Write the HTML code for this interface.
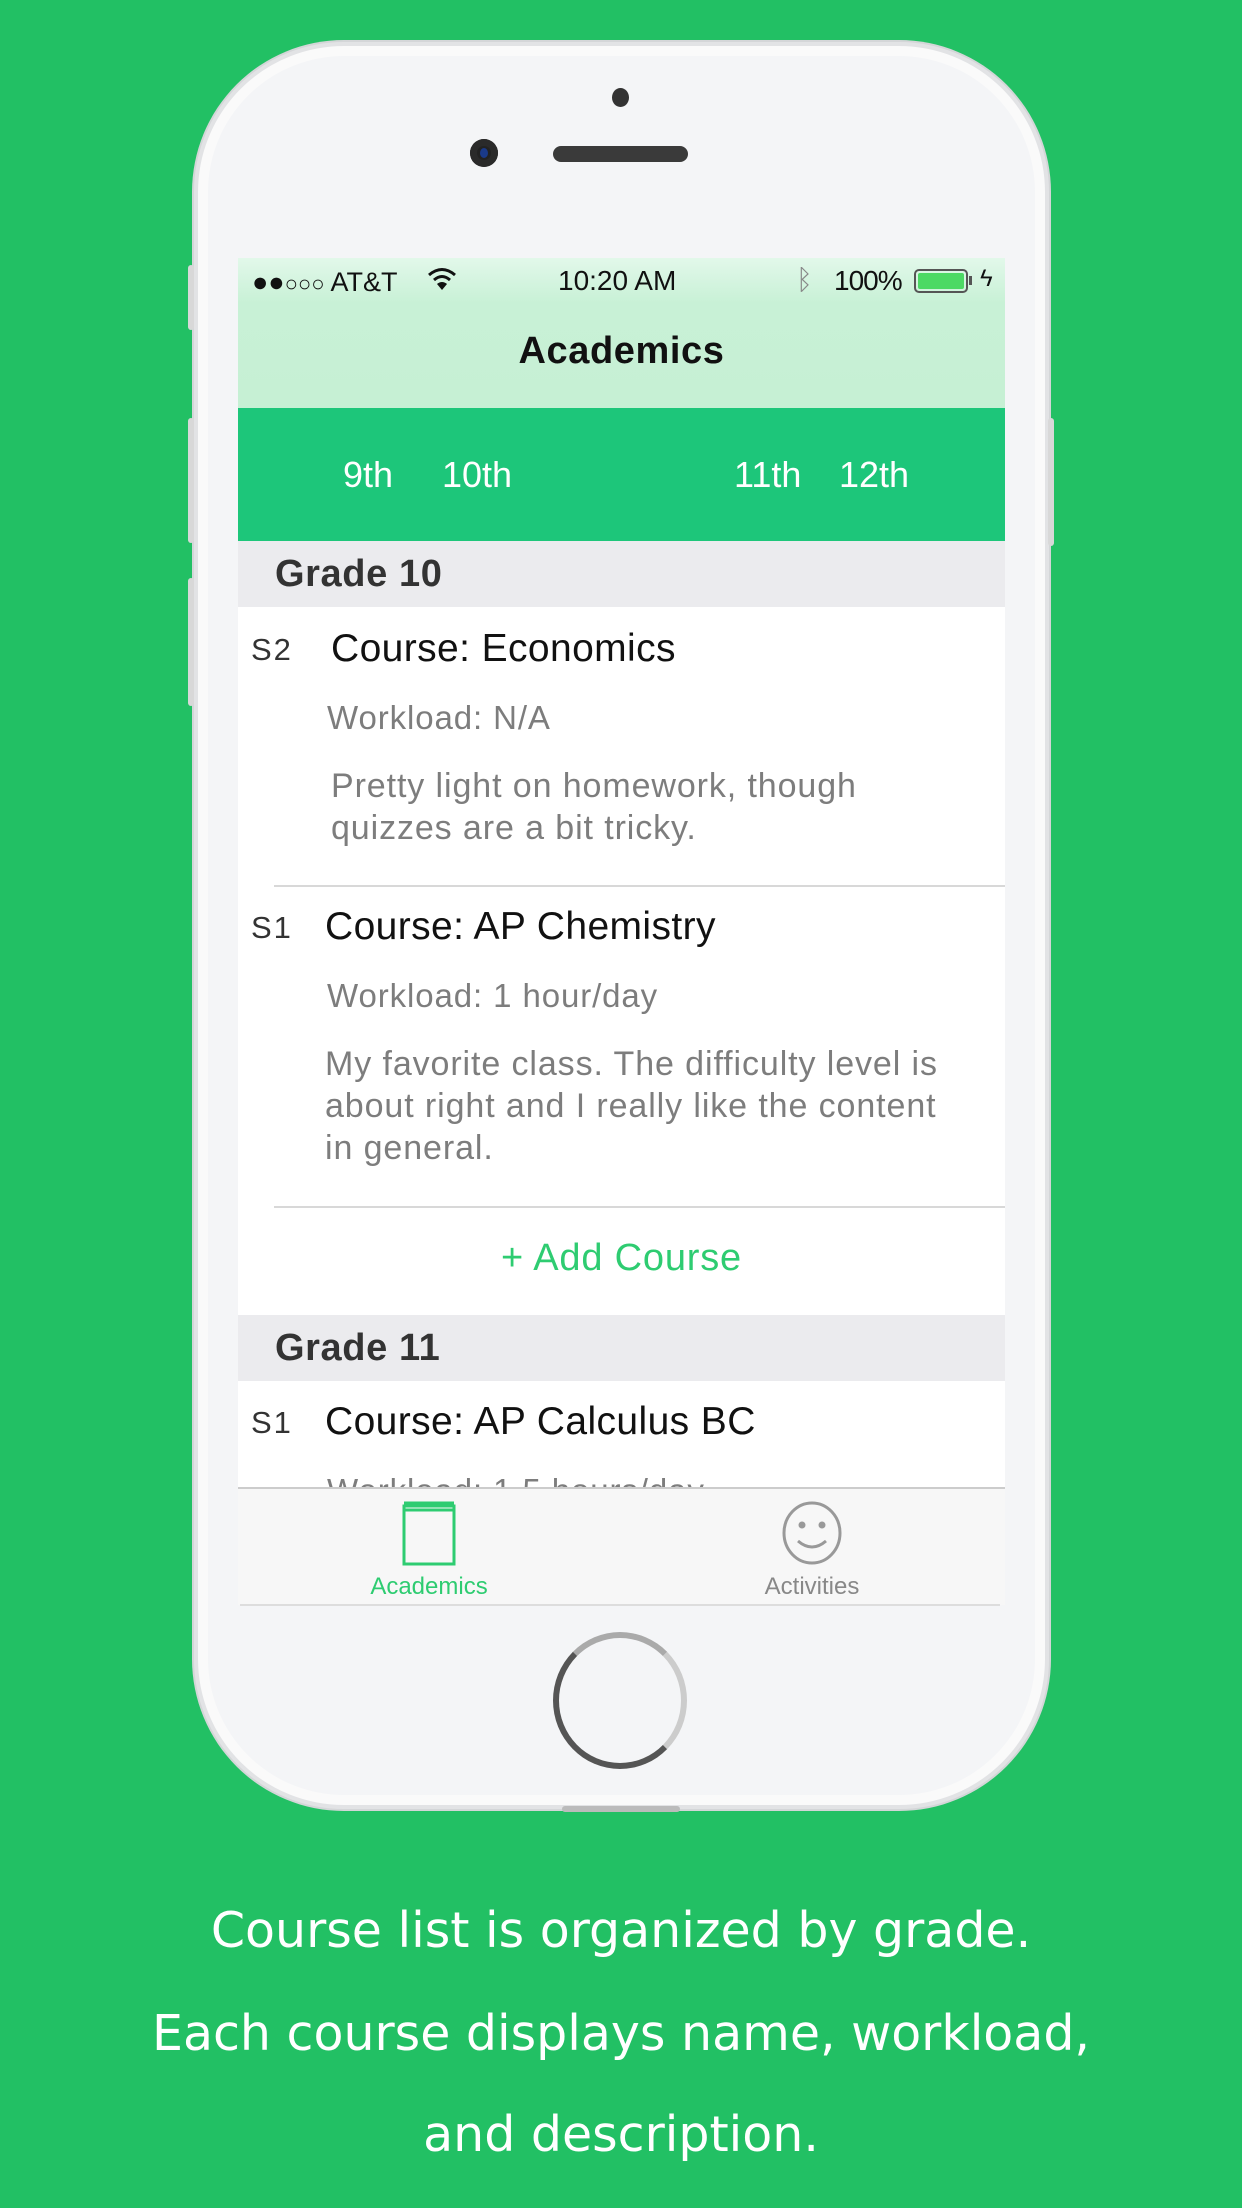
<!DOCTYPE html>
<html><head><meta charset="utf-8"><style>
*{margin:0;padding:0;box-sizing:border-box}
body{width:1242px;height:2208px;background:#22c064;position:relative;overflow:hidden;font-family:"Liberation Sans",sans-serif}
.a{position:absolute;white-space:nowrap}
.phone{position:absolute;left:194px;top:42px;width:855px;height:1767px;border-radius:150px;background:#f4f5f7;border:4px solid #e2e3e5;box-shadow:inset 0 0 0 10px #fafafa,0 0 0 2px #d4d6d8}
.screen{position:absolute;left:238px;top:258px;width:767px;height:1347px;background:#fff;overflow:hidden}
.s{position:absolute;white-space:nowrap}
.gr{color:#7d7d7d;font-size:33px;letter-spacing:0.9px}
.ds{color:#7d7d7d;font-size:34px;letter-spacing:0.9px}
.bl{color:#111;font-size:39px;letter-spacing:0.4px}
.sem{color:#333;font-size:31px;letter-spacing:2px}
.cap{position:absolute;left:0;width:1242px;text-align:center;color:#fff;font-family:"DejaVu Sans",sans-serif;font-size:49px}
</style></head><body>
<div class="phone"></div>
<div class="a" style="left:188px;top:265px;width:6px;height:65px;background:#d8d8d8;border-radius:3px"></div>
<div class="a" style="left:188px;top:418px;width:6px;height:125px;background:#d8d8d8;border-radius:3px"></div>
<div class="a" style="left:188px;top:578px;width:6px;height:128px;background:#d8d8d8;border-radius:3px"></div>
<div class="a" style="left:1048px;top:418px;width:6px;height:128px;background:#d8d8d8;border-radius:3px"></div>
<div class="a" style="left:612px;top:88px;width:17px;height:19px;border-radius:50%;background:#333"></div>
<div class="a" style="left:470px;top:139px;width:28px;height:28px;border-radius:50%;background:#222;box-shadow:inset 0 0 0 7px #2a2a2a"><div style="position:absolute;left:10px;top:9px;width:8px;height:10px;border-radius:50%;background:#1a3a8a"></div></div>
<div class="a" style="left:553px;top:146px;width:135px;height:16px;border-radius:8px;background:#3a3a3a"></div>

<div class="screen">
  <div class="s" style="left:0;top:0;width:767px;height:150px;background:linear-gradient(#e2f8ea,#c8f1d6 30%,#c6f0d4)"></div>
  <div class="s" style="left:14px;top:9px;font-size:27px;color:#111">●●<span style="font-size:22px">○○○</span> AT&amp;T</div>
  <svg class="s" style="left:188px;top:8px" width="32" height="26" viewBox="0 0 32 26"><path d="M3 9 Q16 -2 29 9" stroke="#111" stroke-width="3" fill="none"/><path d="M8 14 Q16 7 24 14" stroke="#111" stroke-width="3" fill="none"/><path d="M11 18 L16 24 L21 18 Q16 14 11 18Z" fill="#111"/></svg>
  <div class="s" style="left:320px;top:7px;font-size:28px;color:#111">10:20 AM</div>
  <div class="s" style="left:558px;top:6px;font-size:28px;color:#888">ᛒ</div>
  <div class="s" style="left:596px;top:7px;font-size:28px;color:#111;letter-spacing:-1px">100%</div>
  <div class="s" style="left:676px;top:11px;width:54px;height:24px;border:2px solid #555;border-radius:5px;padding:2px"><div style="width:100%;height:100%;background:#4cd964;border-radius:2px"></div></div>
  <div class="s" style="left:731px;top:18px;width:3px;height:9px;background:#555"></div>
  <div class="s" style="left:742px;top:7px;font-size:24px;color:#111">ϟ</div>
  <div class="s" style="left:0;top:72px;width:767px;text-align:center;font-size:38px;font-weight:bold;color:#111;letter-spacing:0.6px">Academics</div>
  <div class="s" style="left:0;top:150px;width:767px;height:133px;background:#1dc67a"></div>
  <div class="s" style="left:105px;top:196px;font-size:36px;color:#fff">9th</div>
  <div class="s" style="left:204px;top:196px;font-size:36px;color:#fff">10th</div>
  <div class="s" style="left:496px;top:196px;font-size:36px;color:#fff">11th</div>
  <div class="s" style="left:601px;top:196px;font-size:36px;color:#fff">12th</div>
  <div class="s" style="left:0;top:283px;width:767px;height:66px;background:#ebebee"></div>
  <div class="s" style="left:37px;top:295px;font-size:38px;font-weight:bold;color:#333;letter-spacing:0.6px">Grade 10</div>
  <div class="s sem" style="left:13px;top:374px">S2</div>
  <div class="s bl" style="left:93px;top:369px">Course: Economics</div>
  <div class="s gr" style="left:89px;top:441px">Workload: N/A</div>
  <div class="s ds" style="left:93px;top:509px">Pretty light on homework, though</div>
  <div class="s ds" style="left:93px;top:551px">quizzes are a bit tricky.</div>
  <div class="s" style="left:36px;top:627px;width:731px;height:2px;background:#d8d8d8"></div>
  <div class="s sem" style="left:13px;top:652px">S1</div>
  <div class="s bl" style="left:87px;top:647px">Course: AP Chemistry</div>
  <div class="s gr" style="left:89px;top:719px">Workload: 1 hour/day</div>
  <div class="s ds" style="left:87px;top:787px">My favorite class. The difficulty level is</div>
  <div class="s ds" style="left:87px;top:829px">about right and I really like the content</div>
  <div class="s ds" style="left:87px;top:871px">in general.</div>
  <div class="s" style="left:36px;top:948px;width:731px;height:2px;background:#d8d8d8"></div>
  <div class="s" style="left:0;top:979px;width:767px;text-align:center;font-size:38px;color:#2ecc71;letter-spacing:0.8px">+ Add Course</div>
  <div class="s" style="left:0;top:1057px;width:767px;height:66px;background:#ebebee"></div>
  <div class="s" style="left:37px;top:1069px;font-size:38px;font-weight:bold;color:#333;letter-spacing:0.6px">Grade 11</div>
  <div class="s sem" style="left:13px;top:1147px">S1</div>
  <div class="s bl" style="left:87px;top:1142px">Course: AP Calculus BC</div>
  <div class="s gr" style="left:89px;top:1214px">Workload: 1.5 hours/day</div>
  <div class="s" style="left:0;top:1229px;width:767px;height:118px;background:#f7f7f7;border-top:2px solid #ccc"></div>
  <svg class="s" style="left:163px;top:1242px" width="58" height="66" viewBox="0 0 58 66"><rect x="3" y="6" width="50" height="58" fill="none" stroke="#2ecc71" stroke-width="3"/><line x1="3" y1="3" x2="53" y2="3" stroke="#2ecc71" stroke-width="3"/><line x1="3" y1="10" x2="53" y2="10" stroke="#2ecc71" stroke-width="3"/></svg>
  <div class="s" style="left:91px;top:1315px;width:200px;text-align:center;font-size:24px;color:#2ecc71">Academics</div>
  <svg class="s" style="left:542px;top:1242px" width="64" height="66" viewBox="0 0 64 66"><ellipse cx="32" cy="33" rx="28" ry="30" fill="none" stroke="#999" stroke-width="3"/><circle cx="22" cy="25" r="3.5" fill="#999"/><circle cx="42" cy="25" r="3.5" fill="#999"/><path d="M18 41 Q32 53 46 41" fill="none" stroke="#999" stroke-width="3"/></svg>
  <div class="s" style="left:474px;top:1315px;width:200px;text-align:center;font-size:24px;color:#888">Activities</div>
</div>
<div class="a" style="left:240px;top:1604px;width:760px;height:2px;background:#ddd"></div>
<div class="a" style="left:553px;top:1632px;width:134px;height:137px;border-radius:50%;border:6px solid #555;border-top-color:#aaa;border-right-color:#ccc;background:#f4f5f7"></div>
<div class="a" style="left:562px;top:1806px;width:118px;height:6px;background:#bbb;border-radius:3px"></div>

<div class="cap" style="top:1902px">Course list is organized by grade.</div>
<div class="cap" style="top:2005px">Each course displays name, workload,</div>
<div class="cap" style="top:2106px">and description.</div>
</body></html>
